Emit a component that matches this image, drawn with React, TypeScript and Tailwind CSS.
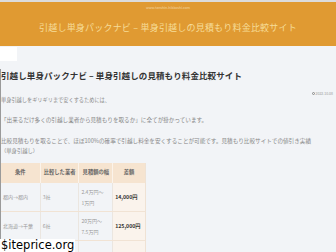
import React from "react";

const jp = { fontFamily: '"Noto Sans CJK JP", "Noto Sans", sans-serif' };

export default function App() {
  const rows = [
    { a: "都内→都内", b: "3社", c1: "2.4万円～", c2: "1万円", d: "14,000円" },
    { a: "北海道→千葉", b: "6社", c1: "20万円～", c2: "7.5万円", d: "125,000円" },
    { a: "", b: "", c1: "1万円～", c2: "", d: "" },
  ];
  return (
    <div className="relative w-[336px] h-[252px] overflow-hidden bg-[#f2f4f7]" style={jp}>
      <div className="h-[2px] bg-[#dcdcdc]" />
      <div className="h-[44px] bg-[#e09a32] flex flex-col items-center">
        <div className="mt-[3px] text-[3.5px] leading-[5px] text-[#f3d9a8]">www.tanshin-hikkoshi.com</div>
        <div className="mt-[12px] text-[9px] leading-[12px] text-[#f6dc98] tracking-[0.2px]">
          引越し単身パックナビ – 単身引越しの見積もり料金比較サイト
        </div>
      </div>
      <div className="w-[17px] h-[14px] bg-white mt-[1px]" />
      <div className="border-l border-[#9a9a9a] h-[200px]">
        <div className="mt-[8px] text-[8.5px] leading-[12px] font-bold text-[#333] tracking-[0.1px]">
          引越し単身パックナビ – 単身引越しの見積もり料金比較サイト
        </div>
        <div className="mt-[10px] flex justify-end items-center pr-[3px] gap-[1px] text-[3.5px] leading-[5px] text-[#999]">
          <span className="inline-block w-[3px] h-[3px] rounded-full border border-[#888]" />
          <span>2022.10.08</span>
        </div>
        <div className="text-[5.2px] leading-[8px] text-[#888]">単身引越しをギリギリまで安くするためには、</div>
        <div className="mt-[12px] text-[5.6px] leading-[8px] text-[#888]">
          「出来るだけ多くの引越し業者から見積もりを取るか」に全てが掛かっています。
        </div>
        <div className="mt-[12px] text-[5.6px] leading-[11px] text-[#888] whitespace-nowrap">
          比較見積もりを取ることで、ほぼ100%の確率で引越し料金を安くすることが可能です。見積もり比較サイトでの値引き実績
        </div>
        <div className="text-[5.3px] leading-[9px] text-[#888]">（単身引越し）</div>
        <div className="mt-[7px] w-[145px] border-r border-[#efe2d4]">
          <div className="flex h-[20px] bg-[#f6e4d0] text-[5.3px] font-bold text-[#666]">
            <div className="w-[40px] flex items-center justify-center border-r border-[#fbf3ea]">条件</div>
            <div className="w-[39px] flex items-center justify-center border-r border-[#fbf3ea]">比較した業者</div>
            <div className="w-[34px] flex items-center justify-center border-r border-[#fbf3ea]">見積額の幅</div>
            <div className="w-[32px] flex items-center justify-center">差額</div>
          </div>
          {rows.map((r, i) => (
            <div key={i} className="flex h-[29px] border-b border-[#f1e3d4] text-[5px] text-[#999]">
              <div className="w-[40px] flex items-center pl-[2px] border-r border-[#ebe6e0]">{r.a}</div>
              <div className="w-[39px] flex items-center pl-[2px] border-r border-[#ebe6e0]">{r.b}</div>
              <div className="w-[34px] flex flex-col justify-center pl-[2px] leading-[11px] border-r border-[#ebe6e0]">
                <span>{r.c1}</span>
                <span>{r.c2}</span>
              </div>
              <div className="w-[32px] flex items-center pl-[2px] bg-[#faf3ec] font-bold text-[#333] text-[5.2px]">{r.d}</div>
            </div>
          ))}
        </div>
      </div>
      <div
        className="absolute left-0 bottom-0 bg-white text-black text-[11.5px] leading-[13px] px-[1px]"
        style={{ fontFamily: '"DejaVu Sans", sans-serif' }}
      >
        $iteprice.org
      </div>
    </div>
  );
}
